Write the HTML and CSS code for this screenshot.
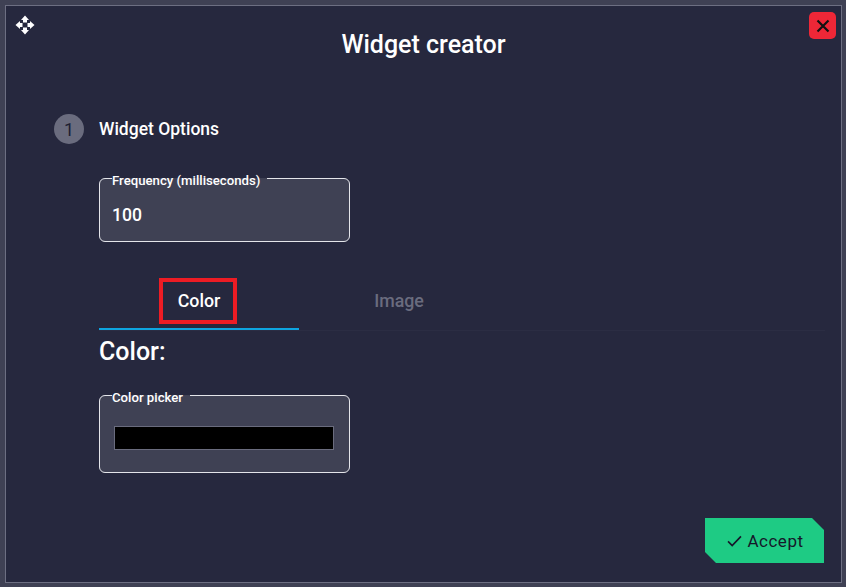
FILE: index.html
```html
<!DOCTYPE html>
<html lang="en">
<head>
<meta charset="utf-8">
<title>Widget creator</title>
<link rel="stylesheet" href="styles.css">
</head>
<body>
<main class="modal">
  <svg class="move" width="20" height="20" viewBox="0 0 20 20" aria-hidden="true">
    <path fill="#fff" d="M10 0.500l4 4.500h-2v2.500h-4V5H6zM10 19.500l-4-4.500h2v-2.500h4V15h2zM0.500 10L5 6v2h2.500v4H5v2zM19.500 10L15 14v-2h-2.500V8H15V6z"/>
  </svg>
  <button class="close" aria-label="Close">
    <svg width="14" height="14" viewBox="0 0 14 14" aria-hidden="true"><path d="M1.500 1.500l11 11M12.500 1.500l-11 11" stroke="#111" stroke-width="2.200" fill="none"/></svg>
  </button>
  <h1 class="title">Widget creator</h1>
  <div class="step">
    <span class="step-num">1</span>
    <span class="step-label">Widget Options</span>
  </div>
  <div class="content">
    <fieldset class="field">
      <legend>Frequency (milliseconds)</legend>
      <div class="value">100</div>
    </fieldset>
    <div class="tabs">
      <div class="tab active"><span class="highlight">Color</span></div>
      <div class="tab">Image</div>
    </div>
    <h2 class="heading">Color:</h2>
    <fieldset class="field picker">
      <legend>Color picker</legend>
      <div class="swatch"></div>
    </fieldset>
  </div>
  <div class="actions">
    <button class="accept">
      <svg width="15" height="12" viewBox="0 0 16 13" aria-hidden="true"><path d="M1 7l4.500 4.500L15 1.500" stroke="#16182a" stroke-width="1.800" fill="none"/></svg>
      Accept
    </button>
  </div>
</main>
</body>
</html>
```
FILE: styles.css
```css
* { box-sizing: border-box; }
html, body { margin: 0; height: 100%; }
body {
  background: #3f4154;
  padding: 5px 4px 4px 5px;
  font-family: Roboto, "Liberation Sans", sans-serif;
  color: #fff;
}
.modal {
  position: relative;
  height: 578px;
  background: #26283e;
  border: 1px solid #6d6f82;
  display: flex;
  flex-direction: column;
}
.move { position: absolute; left: 9px; top: 9px; }
.close {
  position: absolute;
  right: 5px;
  top: 6px;
  width: 27px;
  height: 27px;
  padding: 0;
  border: 0;
  border-radius: 5px;
  background: #ee2737;
  display: flex;
  align-items: center;
  justify-content: center;
}
.title {
  margin: 24px 0 0;
  font-size: 25px;
  line-height: 30px;
  font-weight: 500;
  text-align: center;
}
.step {
  display: flex;
  align-items: center;
  gap: 15px;
  margin: 54px 0 0 48px;
}
.step-num {
  width: 30px;
  height: 30px;
  border-radius: 50%;
  background: #6a6c7e;
  color: #1d1f33;
  font-size: 18px;
  display: flex;
  align-items: center;
  justify-content: center;
}
.step-label { font-size: 17.5px; font-weight: 500; }
.content { margin: 24px 0 0 93px; }
.field {
  width: 251px;
  height: 74px;
  margin: 0;
  padding: 0 12px;
  border: 1px solid #e4e5ea;
  border-radius: 6px;
  background: #3f4154;
}
.field legend {
  padding: 5px 7px 1px 0;
  font-size: 13.2px;
  line-height: 15px;
  font-weight: 500;
}
.value { margin-top: 14px; font-size: 17.6px; line-height: 24px; font-weight: 500; }
.tabs {
  display: flex;
  width: 726px;
  margin-top: 28px;
  border-bottom: 1px solid #2b2d43;
}
.tab {
  width: 200px;
  height: 60px;
  display: flex;
  align-items: center;
  justify-content: center;
  font-size: 17.8px;
  font-weight: 500;
  color: #6a6c7e;
}
.tab.active {
  color: #fff;
  border-bottom: 2px solid #0ea5e0;
  margin-bottom: -1px;
}
.highlight {
  width: 78px;
  height: 46px;
  margin: 4px 2px 0 0;
  padding: 0 0 2px 2px;
  border: 4px solid #ed1c24;
  display: flex;
  align-items: center;
  justify-content: center;
}
.heading {
  margin: 6px 0 0;
  font-size: 25px;
  line-height: 30px;
  font-weight: 500;
}
.picker { height: 88px; margin-top: 18px; }
.swatch {
  height: 24px;
  margin: 20px 3px 0 2px;
  background: #000;
  border: 1px solid #6a6c7e;
}
.actions {
  margin-top: auto;
  padding: 0 17px 19px 0;
  display: flex;
  justify-content: flex-end;
}
.accept {
  width: 119px;
  height: 45px;
  padding-left: 8px;
  border: 0;
  background: #1ecb84;
  color: #16182a;
  font-family: Roboto, "Liberation Sans", sans-serif;
  font-size: 17px;
  letter-spacing: 0.5px;
  display: flex;
  align-items: center;
  justify-content: center;
  gap: 5px;
  clip-path: polygon(0 0, 107px 0, 100% 12px, 100% 100%, 11px 100%, 0 34px);
}
```
